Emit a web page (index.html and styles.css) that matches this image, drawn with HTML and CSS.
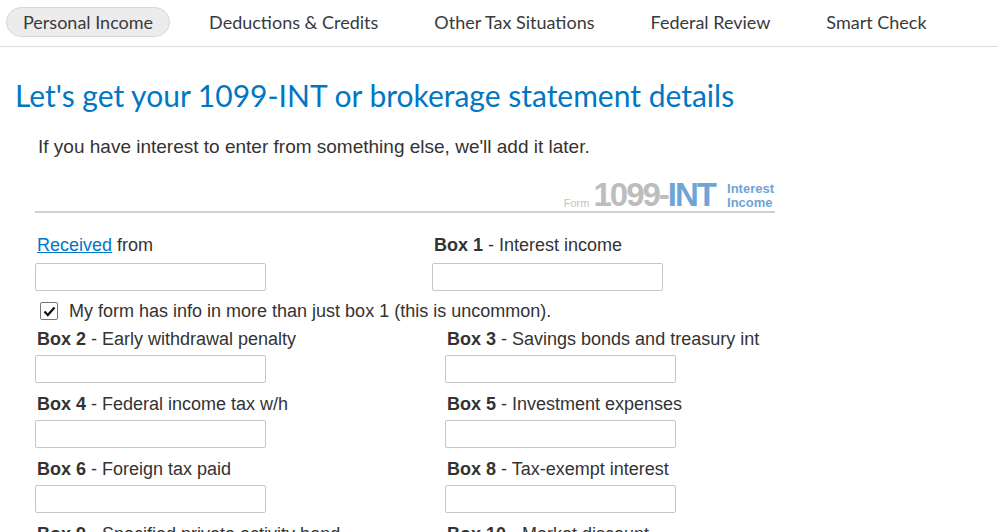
FILE: index.html
```html
<!DOCTYPE html>
<html lang="en">
<head>
    <meta charset="UTF-8">
    <meta name="viewport" content="width=device-width, initial-scale=1.0">
    <title>1099-INT - Personal Income</title>
    <link rel="stylesheet" href="styles.css">
</head>
<body>
    <nav class="top-nav">
        <a href="#" class="nav-tab active">Personal Income</a>
        <a href="#" class="nav-tab">Deductions &amp; Credits</a>
        <a href="#" class="nav-tab">Other Tax Situations</a>
        <a href="#" class="nav-tab">Federal Review</a>
        <a href="#" class="nav-tab">Smart Check</a>
    </nav>

    <main class="page">
        <h1>Let's get your 1099-INT or brokerage statement details</h1>
        <p class="intro">If you have interest to enter from something else, we'll add it later.</p>

        <div class="form-area">
            <div class="form-header">
                <span class="form-word">Form</span>
                <span class="form-number">1099-<span class="form-int">INT</span></span>
                <span class="form-title">Interest<br>Income</span>
            </div>

            <div class="first-row">
                <div class="field">
                    <label><a href="#" class="link">Received</a> from</label>
                    <input type="text" class="text-input">
                </div>
                <div class="field">
                    <label><b>Box 1</b> - Interest income</label>
                    <input type="text" class="text-input">
                </div>
            </div>

            <label class="check-row">
                <span class="check-box">
                    <svg width="13" height="11" viewBox="0 0 13 11"><path d="M1.5 5.5 L4.8 9 L11.5 1.5" fill="none" stroke="#111" stroke-width="2.2"/></svg>
                </span>
                My form has info in more than just box 1 (this is uncommon).
            </label>

            <div class="box-grid">
                <div class="field">
                    <label><b>Box 2</b> - Early withdrawal penalty</label>
                    <input type="text" class="text-input">
                </div>
                <div class="field">
                    <label><b>Box 3</b> - Savings bonds and treasury int</label>
                    <input type="text" class="text-input">
                </div>
                <div class="field">
                    <label><b>Box 4</b> - Federal income tax w/h</label>
                    <input type="text" class="text-input">
                </div>
                <div class="field">
                    <label><b>Box 5</b> - Investment expenses</label>
                    <input type="text" class="text-input">
                </div>
                <div class="field">
                    <label><b>Box 6</b> - Foreign tax paid</label>
                    <input type="text" class="text-input">
                </div>
                <div class="field">
                    <label><b>Box 8</b> - Tax-exempt interest</label>
                    <input type="text" class="text-input">
                </div>
                <div class="field">
                    <label><b>Box 9</b> - Specified private activity bond</label>
                    <input type="text" class="text-input">
                </div>
                <div class="field">
                    <label><b>Box 10</b> - Market discount</label>
                    <input type="text" class="text-input">
                </div>
            </div>
        </div>
    </main>
</body>
</html>
```

FILE: styles.css
```css
body {
    margin: 0;
    padding: 0;
    background-color: white;
    font-family: 'Liberation Sans', Arial, sans-serif;
    color: #333;
    overflow: hidden;
}

.top-nav {
    display: flex;
    align-items: flex-start;
    box-sizing: border-box;
    height: 47px;
    padding: 7px 0 0 6px;
    border-bottom: 1px solid #dcdcdc;
    font-family: 'Lato', sans-serif;
}

.nav-tab {
    color: #393a3d;
    text-decoration: none;
    font-size: 18px;
    padding: 3px 16px;
    margin-right: 22px;
    border: 1px solid transparent;
    border-radius: 15px;
    line-height: 22px;
}

.nav-tab.active {
    background-color: #ececec;
    border-color: #d8d8d8;
}

.page {
    padding: 0 15px;
}

h1 {
    font-family: 'Lato', sans-serif;
    font-weight: normal;
    color: #0077c5;
    font-size: 30px;
    margin: 30px 0 0;
    line-height: 36px;
}

.intro {
    font-size: 19px;
    margin: 22px 0 0 23px;
    line-height: 24px;
}

.form-area {
    width: 740px;
    margin-left: 20px;
}

.form-header {
    display: flex;
    justify-content: flex-end;
    align-items: flex-end;
    gap: 4px;
    padding-right: 1px;
    margin-top: 18px;
    border-bottom: 2px solid #cfcfcf;
    height: 34px;
}

.form-word {
    font-size: 11px;
    color: #c4c4c4;
    margin-bottom: 2px;
}

.form-number {
    font-size: 33px;
    font-weight: bold;
    color: #bdbdbd;
    letter-spacing: -2px;
    line-height: 32px;
    margin-right: 8px;
}

.form-int {
    color: #6ea5d6;
}

.form-title {
    font-size: 13px;
    font-weight: bold;
    color: #6ea5d6;
    line-height: 14px;
    margin-bottom: 1px;
}

.first-row {
    display: grid;
    grid-template-columns: 397px 1fr;
    margin-top: 21px;
}

.box-grid {
    display: grid;
    grid-template-columns: 410px 1fr;
}

.field label {
    display: block;
    font-size: 18px;
    line-height: 22px;
    margin-left: 2px;
}

.first-row .field label {
    margin-bottom: 7px;
}

.box-grid .field label {
    margin-bottom: 5px;
}

.box-grid .field {
    margin-bottom: 10px;
}

.link {
    color: #0077c5;
}

.text-input {
    display: block;
    width: 231px;
    height: 28px;
    box-sizing: border-box;
    border: 1px solid #c6c6c6;
    border-radius: 2px;
    padding: 4px 8px;
    font-size: 16px;
}

.check-row {
    display: flex;
    align-items: center;
    font-size: 18px;
    line-height: 22px;
    margin: 9px 0 6px 5px;
}

.check-box {
    display: flex;
    align-items: center;
    justify-content: center;
    width: 16px;
    height: 16px;
    border: 1px solid #767676;
    border-radius: 2px;
    margin-right: 11px;
}
```
